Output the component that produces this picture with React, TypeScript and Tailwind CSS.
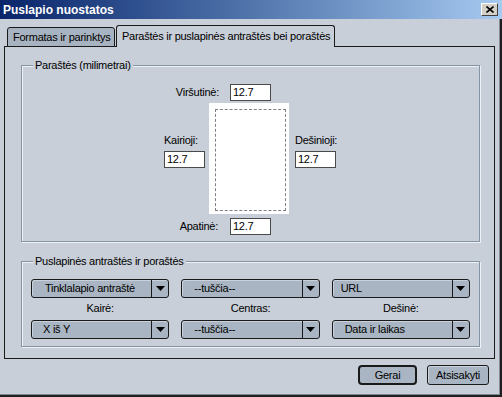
import React from "react";

function Input() {
  return (
    <div className="w-[41px] h-[17px] bg-white border border-[#4a4a4a] pl-[2px] flex items-center leading-none text-[11px]">
      12.7
    </div>
  );
}

function Select({ text, pl }: { text: string; pl: string }) {
  return (
    <div className="h-[19px] flex border border-[#1a1a1a] rounded-[3px] bg-[#a9b5c2] shadow-[inset_1px_1px_0_#c9d2dc] overflow-hidden">
      <div className={"flex-1 flex items-center leading-none whitespace-nowrap " + pl}>{text}</div>
      <div className="w-[17px] border-l border-[#1a1a1a] flex items-center justify-center">
        <svg width="9" height="5" viewBox="0 0 9 5">
          <polygon points="0,0 9,0 4.5,5" fill="#000" />
        </svg>
      </div>
    </div>
  );
}

function Fieldset({ legend, className, children }: { legend: string; className: string; children: React.ReactNode }) {
  return (
    <div className={"relative border border-[#8594a4] shadow-[1px_1px_0_#eef1f5,inset_1px_1px_0_#eef1f5] " + className}>
      <span className="absolute left-[11px] top-[-7px] px-[2px] bg-[#c8cfd8] leading-[13px] whitespace-nowrap">{legend}</span>
      {children}
    </div>
  );
}

export default function App() {
  return (
    <div className="w-[502px] h-[397px] bg-[#c8cfd8] flex flex-col font-['Liberation_Sans',Arial,sans-serif] text-[11px] text-black tracking-[-0.25px] overflow-hidden">
      <div className="h-[19px] shrink-0 flex items-center justify-between bg-gradient-to-r from-[#0a246a] to-[#a6caf0] pl-[3px] pr-[4px]">
        <span className="text-white font-bold text-[12px] tracking-normal leading-none">Puslapio nuostatos</span>
        <div className="w-[17px] h-[13px] bg-[#d4d0c8] border border-t-white border-l-white border-r-[#404040] border-b-[#404040] flex items-center justify-center">
          <svg width="8" height="7" viewBox="0 0 8 7">
            <path d="M0.5 0.5 L7.5 6.5 M7.5 0.5 L0.5 6.5" stroke="#000" strokeWidth="1.6" />
          </svg>
        </div>
      </div>
      <div className="flex-1 flex flex-col border-r-2 border-b-2 border-[#202020] shadow-[inset_-1px_-1px_0_#808890]">
        <div className="flex items-end h-[22px] mt-[6px] -mb-[1px] relative z-10">
          <div className="ml-[7px] w-[108px] h-[20px] border border-[#1a1a1a] rounded-t-[3px] bg-[#a7b3c0] pl-[5px] flex items-center leading-none whitespace-nowrap">
            Formatas ir parinktys
          </div>
          <div className="ml-[1px] w-[219px] h-[22px] border border-b-0 border-[#1a1a1a] rounded-t-[3px] bg-[#c8cfd8] pl-[5px] pb-[1px] flex items-center leading-none whitespace-nowrap">
            Paraštės ir puslapinės antraštės bei poraštės
          </div>
        </div>
        <div className="ml-[4px] w-[491px] h-[313px] shrink-0 border border-[#1a1a1a] pl-[16px] pt-[18px] flex flex-col">
          <Fieldset legend="Paraštės (milimetrai)" className="w-[459px] h-[177px] shrink-0">
            <div className="flex flex-col pt-[18px] pr-[3px]">
              <div className="flex items-center h-[17px]">
                <div className="w-[197px] text-right leading-none">Viršutinė:</div>
                <div className="ml-[11px]">
                  <Input />
                </div>
              </div>
              <div className="mt-[2px] grid grid-cols-[187px_80px_1fr] h-[111px]">
                <div className="justify-self-end mr-[4px] pt-[31px] flex flex-col items-start">
                  <div className="leading-[13px]">Kairioji:</div>
                  <div className="mt-[4px]">
                    <Input />
                  </div>
                </div>
                <div className="bg-white pl-[6px] pt-[6px] pr-[3px] pb-[3px]">
                  <div className="w-full h-full border border-dashed border-[#808080]" />
                </div>
                <div className="pl-[6px] pt-[31px] flex flex-col items-start">
                  <div className="leading-[13px]">Dešinioji:</div>
                  <div className="mt-[4px]">
                    <Input />
                  </div>
                </div>
              </div>
              <div className="mt-[4px] flex items-center h-[17px]">
                <div className="w-[196px] text-right leading-none">Apatinė:</div>
                <div className="ml-[12px]">
                  <Input />
                </div>
              </div>
            </div>
          </Fieldset>
          <Fieldset legend="Puslapinės antraštės ir poraštės" className="mt-[19px] w-[459px] h-[86px] shrink-0">
            <div className="pt-[17px] px-[9px] grid grid-cols-3 gap-x-[12px] grid-rows-[19px_22px_19px]">
              <Select text="Tinklalapio antraštė" pl="pl-[13px]" />
              <Select text="--tuščia--" pl="pl-[12px]" />
              <Select text="URL" pl="pl-[8px]" />
              <div className="flex items-center justify-center leading-none pb-[1px]">Kairė:</div>
              <div className="flex items-center justify-center leading-none pb-[1px]">Centras:</div>
              <div className="flex items-center justify-center leading-none pb-[1px]">Dešinė:</div>
              <Select text="X iš Y" pl="pl-[11px]" />
              <Select text="--tuščia--" pl="pl-[12px]" />
              <Select text="Data ir laikas" pl="pl-[12px]" />
            </div>
          </Fieldset>
        </div>
        <div className="mt-[6px] flex justify-end pr-[11px] gap-[10px]">
          <div className="w-[59px] h-[20px] border-2 border-[#1a1a1a] rounded-[4px] bg-[#a9b5c2] flex items-center justify-center leading-none">
            Gerai
          </div>
          <div className="w-[62px] h-[20px] border border-[#1a1a1a] rounded-[3px] bg-[#a9b5c2] shadow-[inset_1px_1px_0_#c9d2dc] flex items-center justify-center leading-none">
            Atsisakyti
          </div>
        </div>
      </div>
    </div>
  );
}
